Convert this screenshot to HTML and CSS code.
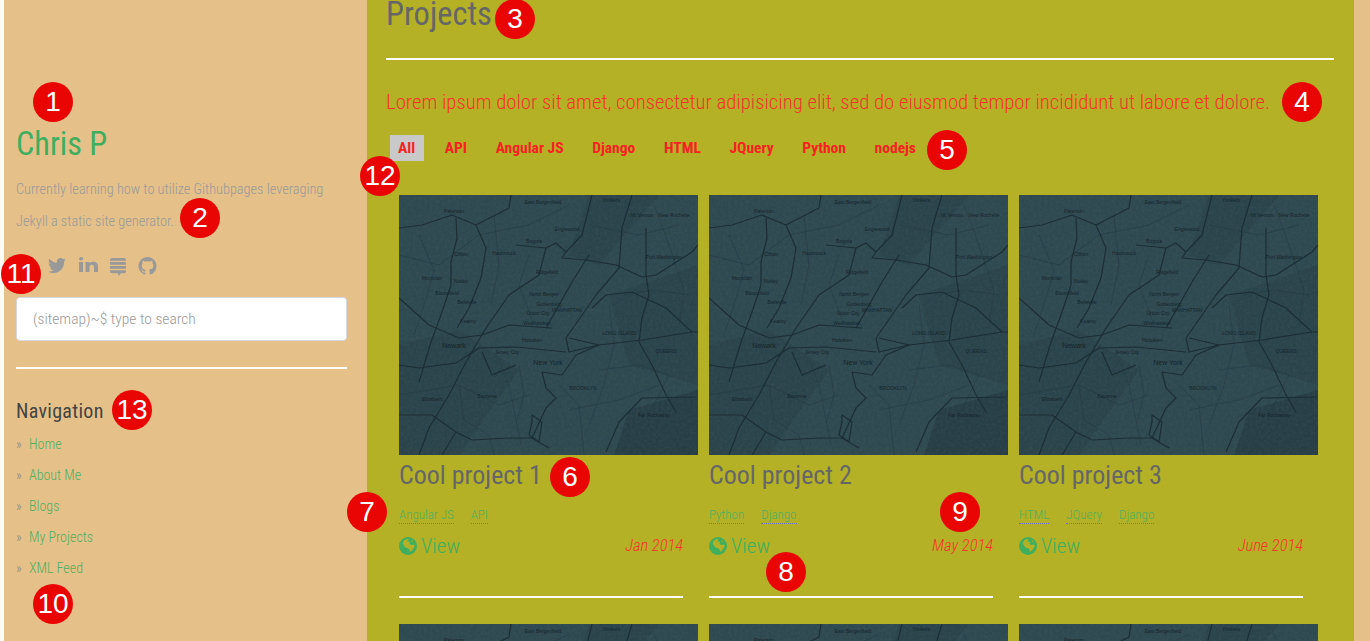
FILE: index.html
```html
<!DOCTYPE html>
<html lang="en">
  <head>
    <meta charset="UTF-8" />
    <title>Projects</title>
    <link rel="stylesheet" href="styles.css">
  </head>
  <body>
    <svg class="defs" width="0" height="0">
      <defs>
        <filter id="grain" x="0" y="0" width="100%" height="100%">
          <feTurbulence type="fractalNoise" baseFrequency="0.35" numOctaves="2" seed="4"/>
          <feColorMatrix values="0 0 0 0 0.1  0 0 0 0 0.17  0 0 0 0 0.2  0 0 0 1.1 -0.35"/>
        </filter>
        <symbol id="map" viewBox="0 0 299 260">
          <rect width="299" height="260" fill="#2f4951"/>
          <g fill="#2b434b">
            <path d="M0 150 L60 135 L120 175 L60 260 L0 260Z"/>
            <path d="M210 100 L299 70 L299 190 L230 170Z"/>
            <path d="M230 215 L299 195 L299 260 L215 260Z" fill="#283e46"/>
            <path d="M190 0 L260 0 L200 70 L170 60Z"/>
          </g>
          <rect width="299" height="260" filter="url(#grain)" opacity=".25"/>
          <g fill="none" stroke="#253b44" stroke-width=".6">
            <path d="M0 60 L40 70 L80 40 L130 30 L170 10"/>
            <path d="M0 200 L60 190 L100 210 L130 200"/>
            <path d="M170 215 L220 205 L260 190"/>
            <path d="M190 30 L240 40 L280 30"/>
            <path d="M120 170 L125 200 L118 225"/>
            <path d="M200 175 L240 170 L270 180 L250 220"/>
            <path d="M130 60 L120 90 L135 130"/>
            <path d="M225 100 L255 95 L290 100"/>
            <path d="M20 40 L35 75 L25 110 L15 140"/>
            <path d="M95 20 L100 70 L92 110"/>
            <path d="M210 110 L215 150 L205 190 L190 230"/>
            <path d="M60 190 L65 225 L90 240 L95 260"/>
            <path d="M255 10 L270 50 L285 95 L280 130"/>
            <path d="M160 190 L180 210 L185 260"/>
            <path d="M100 165 L110 190 L115 215 L122 250"/>
          </g>
          <g fill="none" stroke="#1c2e35" stroke-width="1.2" stroke-linejoin="round">
            <path d="M0 33 L23 30 L53 20 L77 30 L110 13 L112 0"/>
            <path d="M57 23 L58 43 L52 67 L52 90 L43 117 L32 147 L20 187"/>
            <path d="M77 30 L87 53 L82 83 L70 113 L58 133"/>
            <path d="M117 50 L147 53 L157 48 L167 57 L163 63 L187 65 L217 70 L243 82 L257 80 L293 57 L299 50"/>
            <path d="M147 53 L140 80 L110 100 L87 133 L67 167 L50 200 L30 233 L20 260"/>
            <path d="M193 0 L183 40 L167 57"/>
            <path d="M190 60 L173 87 L147 133"/>
            <path d="M233 0 L223 33 L220 73 L197 100 L167 143 L170 157 L200 150"/>
            <path d="M247 33 L247 80 L250 100 L243 123 L240 147 L253 170 L267 200 L277 217"/>
            <path d="M0 103 L30 130 L60 143 L83 140 L110 130 L153 133"/>
            <path d="M0 170 L20 173 L57 168 L80 153 L117 152 L167 157"/>
            <path d="M193 113 L207 100 L233 97 L267 113 L293 137 L299 137"/>
            <path d="M170 143 L200 150 L243 145 L293 137"/>
            <path d="M207 257 L220 227 L243 203 L297 202"/>
            <path d="M133 227 L130 240 L140 247 L143 227 L133 220Z"/>
            <path d="M143 177 L147 193 L157 203 L147 213 L133 243 L150 253"/>
            <path d="M0 220 L33 220 L57 237 L73 245 L110 243 L133 243"/>
            <path d="M57 237 L43 260"/>
            <path d="M83 157 L93 180 L117 170"/>
            <path d="M143 177 L163 180 L177 160 L200 150"/>
          </g>
          <g class="map-labels" text-anchor="middle">
            <text x="144" y="9">East Bergenfield</text>
            <text x="212" y="7">Yonkers</text>
            <text x="55" y="18">Paterson</text>
            <text x="243" y="22">Mt Vernon</text>
            <text x="275" y="22">New Rochelle</text>
            <text x="168" y="36">Englewood</text>
            <text x="135" y="48">Bogota</text>
            <text x="62" y="61">Clifton</text>
            <text x="105" y="60">Hasbrouck</text>
            <text x="33" y="85">Montclair</text>
            <text x="62" y="88">Nutley</text>
            <text x="48" y="100">Bloomfield</text>
            <text x="68" y="109">Belleville</text>
            <text x="148" y="79">Ridgefield</text>
            <text x="145" y="101">North Bergen</text>
            <text x="150" y="111">Guttenberg</text>
            <text x="139" y="120">Union City</text>
            <text x="138" y="130">Weehawken</text>
            <text x="133" y="147">Hoboken</text>
            <text x="168" y="117">MANHATTAN</text>
            <text x="69" y="128">Kearny</text>
            <text x="108" y="159">Jersey City</text>
            <text x="184" y="195">BROOKLYN</text>
            <text x="88" y="203">Bayonne</text>
            <text x="33" y="206">Elizabeth</text>
            <text x="267" y="158">QUEENS</text>
            <text x="265" y="64">Port Washington</text>
            <text x="220" y="140">LONG ISLAND</text>
            <text x="255" y="222">Far Rockaway</text>
            <text class="map-city" x="55" y="153">Newark</text>
            <text class="map-city" x="149" y="170">New York</text>
          </g>
        </symbol>
        <symbol id="i-globe" viewBox="0 0 24 24">
          <circle cx="12" cy="12" r="12" fill="currentColor"/>
          <path fill="#b5b126" d="M8 3.500 L12 2.500 L13 4 L11 5 L12 6.500 L14 6 L15 8 L13.500 9 L16 10.500 L20 10 L21 12 L19 15.500 L16 19 L15 20 L14 16.500 L12 15 L8.500 14 L6.500 11 L5 8.500 L6 5.500Z M17 4 L19 5.500 L17.500 6.500Z"/>
        </symbol>
      </defs>
    </svg>

    <div class="page">
      <aside class="sidebar">
        <h1 class="site-name">Chris P</h1>
        <p class="site-desc">Currently learning how to utilize Githubpages leveraging Jekyll a static site generator.</p>
        <div class="social">
          <svg class="social-icon fb" viewBox="0 0 18 18"><path d="M2 0h14a2 2 0 0 1 2 2v14a2 2 0 0 1-2 2h-4v-7h2.400l.4-2.800H12V6.500c0-.8.3-1.300 1.400-1.300H15V2.700C14.600 2.600 13.800 2.600 13 2.600c-2.100 0-3.700 1.300-3.700 3.600v2H7V11h2.300v7H2a2 2 0 0 1-2-2V2a2 2 0 0 1 2-2z"/></svg>
          <svg class="social-icon tw" viewBox="0 0 24 19" preserveAspectRatio="none"><path d="M24 2.400c-.9.400-1.800.7-2.800.8 1-.6 1.800-1.600 2.200-2.700-1 .6-2 1-3.100 1.200C19.300.6 18 0 16.600 0c-2.700 0-4.900 2.200-4.900 4.900 0 .4 0 .8.100 1.100C7.700 5.800 4.100 3.900 1.700.9c-.4.700-.7 1.600-.7 2.500 0 1.700.9 3.200 2.200 4.100-.8 0-1.600-.2-2.200-.6v.1c0 2.400 1.700 4.400 3.900 4.800-.4.100-.8.200-1.300.2-.3 0-.6 0-.9-.1.600 2 2.400 3.400 4.600 3.400-1.700 1.300-3.800 2.100-6.100 2.100-.4 0-.8 0-1.200-.1C2.200 18.200 4.800 19 7.500 19c9.100 0 14-7.500 14-14v-.6c1-.7 1.800-1.600 2.500-2z"/></svg>
          <svg class="social-icon in" viewBox="0 0 20 19" preserveAspectRatio="none"><path d="M0 6.300h4.200V19H0zM2.100 0C3.500 0 4.400.9 4.400 2.200S3.500 4.400 2.100 4.400 0 3.500 0 2.200 .9 0 2.100 0zM6.900 6.300h4v1.800c.6-1 1.900-2.100 3.900-2.100 4.200 0 5.200 2.700 5.200 6.300V19h-4.200v-5.900c0-1.600-.4-3.300-2.300-3.300-2 0-2.400 1.500-2.400 3.300V19H6.900z"/></svg>
          <svg class="social-icon so" viewBox="0 0 16 20" preserveAspectRatio="none"><path d="M2 0h12a2 2 0 0 1 2 2v1H0V2a2 2 0 0 1 2-2zM0 4.500h16v3H0zM0 9h16v3H0zM0 13.500h16V15a2 2 0 0 1-2 2h-3l-2.500 3L8 17H2a2 2 0 0 1-2-2z"/></svg>
          <svg class="social-icon gh" viewBox="0 0 16 16"><path d="M8 0C3.580 0 0 3.580 0 8c0 3.540 2.290 6.530 5.470 7.590.4.070.55-.17.55-.38 0-.19-.01-.82-.01-1.490-2.010.37-2.530-.49-2.690-.94-.09-.23-.48-.94-.82-1.130-.28-.15-.68-.52-.01-.53.63-.01 1.080.58 1.230.82.720 1.210 1.870.87 2.330.66.070-.52.280-.87.510-1.070-1.780-.2-3.640-.89-3.640-3.950 0-.87.310-1.590.82-2.150-.08-.2-.36-1.020.08-2.120 0 0 .67-.21 2.200.82.640-.18 1.320-.27 2-.27s1.360.09 2 .27c1.530-1.040 2.200-.82 2.200-.82.440 1.100.16 1.920.08 2.120.51.560.82 1.270.82 2.150 0 3.070-1.870 3.750-3.650 3.950.29.250.54.730.54 1.480 0 1.070-.01 1.930-.01 2.200 0 .21.150.46.550.38A8.010 8.010 0 0 0 16 8c0-4.420-3.580-8-8-8z"/></svg>
        </div>
        <input class="search" type="text" placeholder="(sitemap)~$ type to search" />
        <hr class="rule side-rule" />
        <h3 class="nav-title">Navigation</h3>
        <ul class="nav-list">
          <li><a href="#">Home</a></li>
          <li><a href="#">About Me</a></li>
          <li><a href="#">Blogs</a></li>
          <li><a href="#">My Projects</a></li>
          <li><a href="#">XML Feed</a></li>
        </ul>
      </aside>

      <main class="content">
        <h2 class="page-title">Projects</h2>
        <hr class="rule title-rule" />
        <p class="lead">Lorem ipsum dolor sit amet, consectetur adipisicing elit, sed do eiusmod tempor incididunt ut labore et dolore.</p>
        <div class="filters">
          <a class="filter active" href="#">All</a>
          <a class="filter" href="#">API</a>
          <a class="filter" href="#">Angular JS</a>
          <a class="filter" href="#">Django</a>
          <a class="filter" href="#">HTML</a>
          <a class="filter" href="#">JQuery</a>
          <a class="filter" href="#">Python</a>
          <a class="filter" href="#">nodejs</a>
        </div>

        <div class="projects">
          <article class="project">
            <svg class="thumb"><use href="#map"/></svg>
            <h3 class="project-name">Cool project 1</h3>
            <div class="tags"><a href="#">Angular JS</a><a href="#">API</a></div>
            <div class="project-foot">
              <a class="view" href="#"><svg class="globe"><use href="#i-globe"/></svg>View</a>
              <em class="date">Jan 2014</em>
            </div>
            <hr class="rule card-rule" />
          </article>
          <article class="project">
            <svg class="thumb"><use href="#map"/></svg>
            <h3 class="project-name">Cool project 2</h3>
            <div class="tags"><a href="#">Python</a><a href="#">Django</a></div>
            <div class="project-foot">
              <a class="view" href="#"><svg class="globe"><use href="#i-globe"/></svg>View</a>
              <em class="date">May 2014</em>
            </div>
            <hr class="rule card-rule" />
          </article>
          <article class="project">
            <svg class="thumb"><use href="#map"/></svg>
            <h3 class="project-name">Cool project 3</h3>
            <div class="tags"><a href="#">HTML</a><a href="#">JQuery</a><a href="#">Django</a></div>
            <div class="project-foot">
              <a class="view" href="#"><svg class="globe"><use href="#i-globe"/></svg>View</a>
              <em class="date">June 2014</em>
            </div>
            <hr class="rule card-rule" />
          </article>
          <article class="project"><svg class="thumb"><use href="#map"/></svg></article>
          <article class="project"><svg class="thumb"><use href="#map"/></svg></article>
          <article class="project"><svg class="thumb"><use href="#map"/></svg></article>
        </div>
      </main>
    </div>

    <!-- numbered callouts lying over the screenshot -->
    <span class="marker m1">1</span>
    <span class="marker m2">2</span>
    <span class="marker m3">3</span>
    <span class="marker m4">4</span>
    <span class="marker m5">5</span>
    <span class="marker m6">6</span>
    <span class="marker m7">7</span>
    <span class="marker m8">8</span>
    <span class="marker m9">9</span>
    <span class="marker m10">10</span>
    <span class="marker m11">11</span>
    <span class="marker m12">12</span>
    <span class="marker m13">13</span>
  </body>
</html>
```

FILE: styles.css
```css
html, body
{
  margin: 0;
  height: 641px;
  overflow: hidden;
}
body
{
  position: relative;
  background-color: #fdfdf8;
  font-family: Roboto, "Liberation Sans", sans-serif;
  font-stretch: 75%;
}
.defs
{
  position: absolute;
}
.page
{
  display: flex;
  height: 641px;
  margin-left: 4px;
  padding-right: 16px;
  background-color: #e5c189;
  overflow: hidden;
}
a
{
  text-decoration: none;
}
.rule
{
  height: 2px;
  margin: 0;
  border: none;
  background-color: #fff;
}

/* sidebar */
.sidebar
{
  flex: 0 0 363px;
  box-sizing: border-box;
  padding: 125px 20px 0 12px;
}
.site-name
{
  margin: 0;
  font-size: 32.3px;
  line-height: 38px;
  font-weight: 400;
  color: #3fae5e;
}
.site-desc
{
  margin: 10px 0 0;
  font-size: 14.3px;
  line-height: 32px;
  font-weight: 300;
  color: #999;
}
.social
{
  display: flex;
  align-items: flex-start;
  height: 20px;
  margin: 20px 0 0 2px;
}
.social-icon
{
  flex: none;
  fill: #999;
}
.fb { width: 16px; height: 16px; margin-right: 14px; }
.tw { width: 18px; height: 15px; margin-top: 1px; margin-right: 13px; }
.in { width: 19px; height: 15px; margin-right: 12px; }
.so { width: 16px; height: 18px; margin-top: 1px; margin-right: 12px; }
.gh { width: 19px; height: 18px; }
.search
{
  display: block;
  box-sizing: border-box;
  width: 331px;
  height: 44px;
  margin: 20px 0 0;
  padding: 0 16px;
  border: 1px solid #d5d8e0;
  border-radius: 4px;
  background: #fff;
  font: inherit;
  font-size: 15.5px;
  font-weight: 300;
  font-stretch: 75%;
}
.search::placeholder
{
  color: #999;
  opacity: 1;
}
.side-rule
{
  width: 331px;
  margin-top: 26px;
}
.nav-title
{
  margin: 31px 0 0;
  font-size: 20px;
  line-height: 22px;
  font-weight: 400;
  letter-spacing: .3px;
  color: #444;
}
.nav-list
{
  list-style: none;
  margin: 7px 0 0;
  padding: 0;
}
.nav-list li
{
  height: 31.1px;
  font-size: 14px;
  line-height: 31px;
  font-weight: 300;
  color: #888;
}
.nav-list li::before
{
  content: "»";
  display: inline-block;
  width: 13px;
}
.nav-list a
{
  color: #4fae5f;
}

/* main column */
.content
{
  flex: 0 0 987px;
  box-sizing: border-box;
  padding: 0 20px 0 19px;
  background-color: #b5b126;
}
.page-title
{
  margin: 0;
  font-size: 32.5px;
  line-height: 28px;
  font-weight: 400;
  color: #666;
}
.title-rule
{
  margin-top: 30px;
}
.lead
{
  margin: 27px 0 0;
  font-size: 20.75px;
  line-height: 30px;
  font-weight: 300;
  color: #f5332a;
}
.filters
{
  display: flex;
  margin: 18px 0 0 4px;
}
.filter
{
  padding: 0 8px;
  margin-right: 12.7px;
  height: 26px;
  font-size: 15.5px;
  line-height: 26px;
  font-weight: 700;
  color: #f52222;
}
.filter.active
{
  padding-right: 9px;
  background-color: #c9c9c9;
}
.projects
{
  display: grid;
  grid-template-columns: repeat(3, 299px);
  column-gap: 11px;
  row-gap: 26px;
  margin: 34px 0 0 13px;
}
.thumb
{
  display: block;
  width: 299px;
  height: 260px;
}
.project-name
{
  margin: 5px 0 0;
  font-size: 26px;
  line-height: 30px;
  font-weight: 400;
  color: #666;
}
.tags
{
  display: flex;
  gap: 17px;
  margin-top: 17px;
}
.tags a
{
  font-size: 13px;
  line-height: 16px;
  font-weight: 300;
  color: #4fae5f;
  border-bottom: 1px dotted #6a6ad0;
}
.project-foot
{
  display: flex;
  justify-content: space-between;
  align-items: center;
  width: 284px;
  margin-top: 8px;
}
.view
{
  display: flex;
  align-items: center;
  gap: 4px;
  font-size: 21px;
  line-height: 28px;
  font-weight: 300;
  color: #3fae5e;
}
.globe
{
  width: 18px;
  height: 18px;
  color: #3fae5e;
}
.date
{
  margin-bottom: 2px;
  font-size: 16.5px;
  font-weight: 300;
  color: #f5332a;
}
.card-rule
{
  width: 284px;
  margin-top: 36px;
}
.map-labels
{
  font-family: "Liberation Sans", sans-serif;
  font-size: 5px;
  fill: #14252b;
}
.map-labels .map-city
{
  font-size: 7px;
}

/* callouts */
.marker
{
  position: absolute;
  width: 40px;
  height: 40px;
  border-radius: 50%;
  background-color: #ea0505;
  color: #fff;
  font-family: "Liberation Sans", sans-serif;
  font-size: 28px;
  line-height: 40px;
  text-align: center;
}
.m1 { left: 33px; top: 82px; }
.m2 { left: 180px; top: 198px; }
.m3 { left: 495px; top: -1px; }
.m4 { left: 1282px; top: 82px; }
.m5 { left: 927px; top: 130px; }
.m6 { left: 550px; top: 457px; }
.m7 { left: 347px; top: 492px; }
.m8 { left: 766px; top: 552px; }
.m9 { left: 940px; top: 492px; }
.m10 { left: 33px; top: 584px; }
.m11 { left: 1px; top: 254px; }
.m12 { left: 360px; top: 156px; }
.m13 { left: 112px; top: 390px; }
```
